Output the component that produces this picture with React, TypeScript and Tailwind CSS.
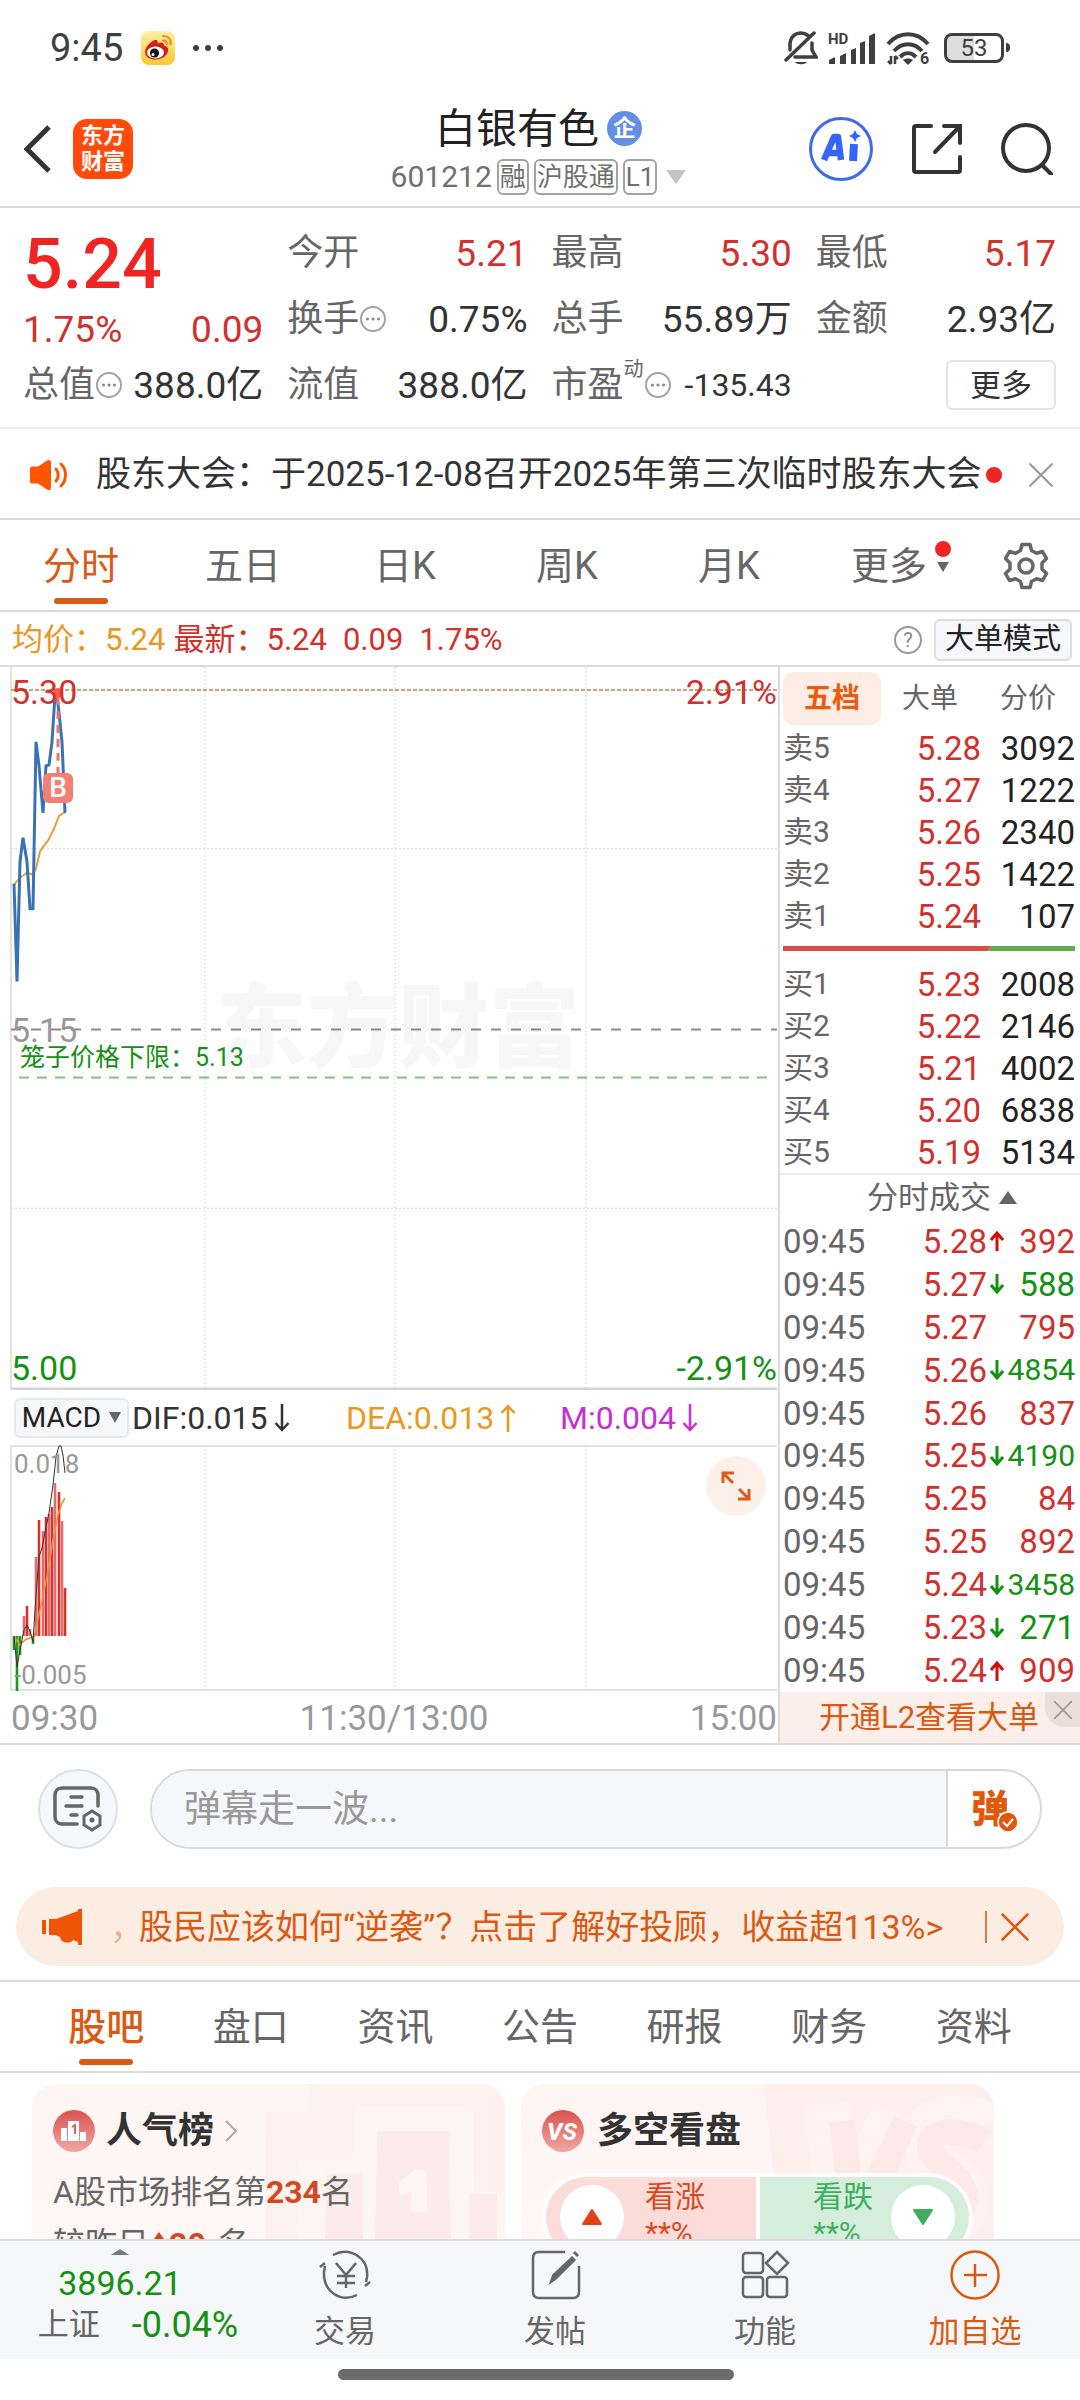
import type { ReactNode } from "react";
import clsx from "clsx";

const RED = "text-[#d0312d]";
const GREEN = "text-[#149114]";

const periods = ["分时", "五日", "日K", "周K", "月K"];

const sells = [
  { label: "卖5", price: "5.28", volume: "3092" },
  { label: "卖4", price: "5.27", volume: "1222" },
  { label: "卖3", price: "5.26", volume: "2340" },
  { label: "卖2", price: "5.25", volume: "1422" },
  { label: "卖1", price: "5.24", volume: "107" },
];

const buys = [
  { label: "买1", price: "5.23", volume: "2008" },
  { label: "买2", price: "5.22", volume: "2146" },
  { label: "买3", price: "5.21", volume: "4002" },
  { label: "买4", price: "5.20", volume: "6838" },
  { label: "买5", price: "5.19", volume: "5134" },
];

const trades = [
  { price: "5.28", dir: "up", volume: "392", buy: true },
  { price: "5.27", dir: "down", volume: "588", buy: false },
  { price: "5.27", dir: "", volume: "795", buy: true },
  { price: "5.26", dir: "down", volume: "4854", buy: false },
  { price: "5.26", dir: "", volume: "837", buy: true },
  { price: "5.25", dir: "down", volume: "4190", buy: false },
  { price: "5.25", dir: "", volume: "84", buy: true },
  { price: "5.25", dir: "", volume: "892", buy: true },
  { price: "5.24", dir: "down", volume: "3458", buy: false },
  { price: "5.23", dir: "down", volume: "271", buy: false },
  { price: "5.24", dir: "up", volume: "909", buy: true },
];

// MACD histogram: x, y of the bar's end; zero line is at 191
const macdBars = [
  [14, 205],
  [17, 246],
  [20, 210],
  [24, 171],
  [27, 161],
  [30, 184],
  [33, 199],
  [36, 112],
  [39, 75],
  [43, 86],
  [46, 72],
  [49, 69],
  [52, 62],
  [55, 38],
  [59, 47],
  [62, 76],
  [65, 143],
];

const infoTabs = ["股吧", "盘口", "资讯", "公告", "研报", "财务", "资料"];

const Arrow = ({ up }: { up?: boolean }) => (
  <svg viewBox="0 0 16 28" className="h-7 w-4" fill="none" stroke="currentColor" strokeWidth="2.500">
    {up ? <path d="M8 28V2M1.500 9L8 2l6.500 7" /> : <path d="M8 0v26M1.500 19L8 26l6.500-7" />}
  </svg>
);

const TickArrow = ({ up }: { up?: boolean }) => (
  <svg viewBox="0 0 14 20" className="mx-auto h-5 w-[14px]" fill="none" stroke="currentColor" strokeWidth="3">
    {up ? <path d="M7 20V2M1 9l6-7 6 7" /> : <path d="M7 0v18M1 11l6 7 6-7" />}
  </svg>
);

const Close = ({ className }: { className: string }) => (
  <svg viewBox="0 0 24 24" className={className} fill="none" stroke="currentColor" strokeLinecap="round">
    <path d="M2 2l20 20M22 2L2 22" />
  </svg>
);

const Dots = () => (
  <svg viewBox="0 0 28 28" className="h-7 w-7 shrink-0" fill="none" stroke="#a3a3a3" strokeWidth="2">
    <circle cx="14" cy="14" r="12" />
    <g fill="#8a8a8a" stroke="none">
      <circle cx="8.500" cy="14" r="1.600" />
      <circle cx="14" cy="14" r="1.600" />
      <circle cx="19.500" cy="14" r="1.600" />
    </g>
  </svg>
);

const StatusBar = () => (
  <div className="flex h-[95px] items-center pl-[50px] pr-[70px] text-[#3f3f3f]">
    <span className="text-[38px] leading-none">9:45</span>
    <svg viewBox="0 0 34 34" className="ml-[18px] h-[34px] w-[34px]">
      <defs>
        <linearGradient id="weibo" x1="0" y1="0" x2="0" y2="1">
          <stop offset="0" stopColor="#fdf0a8" />
          <stop offset="1" stopColor="#fdc92f" />
        </linearGradient>
      </defs>
      <rect width="34" height="34" rx="8" fill="url(#weibo)" />
      <path d="M4 21c0-5 6-11 10-12 3-.6 3 2 2.500 3.500 3-1.500 7-1.500 6.500 2 3 1 5 2.500 4 6-1.500 5-7 8-12.500 8S4 26 4 21z" fill="#d81e1c" />
      <ellipse cx="14.500" cy="21.500" rx="8.500" ry="6" fill="#fff" />
      <circle cx="13.500" cy="22" r="4.600" fill="#111" />
      <circle cx="12" cy="23.500" r="1.500" fill="#fff" />
      <path d="M22 5c5-.5 8.500 3.500 7.500 8.500M22 9.500c2.500-.3 4.200 1.500 3.700 4" stroke="#ef8a1c" strokeWidth="2" fill="none" strokeLinecap="round" />
    </svg>
    <svg viewBox="0 0 32 8" className="ml-[17px] h-2 w-8" fill="currentColor">
      <circle cx="4" cy="4" r="3" />
      <circle cx="16" cy="4" r="3" />
      <circle cx="28" cy="4" r="3" />
    </svg>

    <div className="ml-auto flex items-center">
      <svg viewBox="0 0 34 36" className="h-9 w-[34px]" fill="none" stroke="currentColor" strokeWidth="3.500" strokeLinecap="round">
        <path d="M6 20v-5C6 7 11 3 17 3c3 0 5 1 7 2.500M28 13v7l4 7H11M2 30L30 3" />
        <path d="M11 32h12c-1.500 3-10.500 3-12 0z" fill="currentColor" stroke="none" />
      </svg>
      <svg viewBox="0 0 48 34" className="ml-[10px] h-[34px] w-12" fill="currentColor">
        <path d="M1 33v-4l6-3v7zM12 33V25l6-3v11zM23 33V19l5-2v16zM32 33V12l5-2v23zM41 33V5l6-3v31z" />
        <text x="0" y="13" fontSize="15" fontWeight="700">HD</text>
      </svg>
      <svg viewBox="0 0 46 34" className="ml-[10px] h-[34px] w-[46px]" fill="none" stroke="currentColor" strokeWidth="4">
        <path d="M2 13c11-13 29-13 40 0M8 20c8-9 20-9 28 0M14 26c5-5 11-5 16 0" />
        <path d="M17 29c3-2 7-2 10 0l-5 5z" fill="currentColor" stroke="none" />
        <path d="M5 25v8M2 30l3 3M9 33v-8M9 25l3 3" strokeWidth="2.500" />
        <text x="34" y="33" fontSize="16" fontWeight="700" fill="currentColor" stroke="none">6</text>
      </svg>
      <div className="ml-3 flex h-[30px] w-[60px] items-center justify-center rounded-lg border-[3px] border-[#3f3f3f] bg-gradient-to-r from-[#dedede] from-50% to-white to-50% text-[24px] leading-6">
        53
      </div>
      <div className="ml-[2px] h-[9px] w-[4px] rounded-r bg-[#3f3f3f]" />
    </div>
  </div>
);

const Tag = ({ children }: { children: ReactNode }) => (
  <span className="flex h-9 items-center rounded-md border-2 border-[#a2a2a2] px-px text-[26px] leading-none">
    {children}
  </span>
);

const Header = () => (
  <header className="flex h-[113px] items-center border-b-2 border-[#dcdcdc] pl-6 pr-[27px]">
    <div className="flex flex-1 items-center gap-[22px] pb-1">
      <button type="button" aria-label="返回">
        <svg viewBox="0 0 27 48" className="h-12 w-[27px]" fill="none" stroke="#333" strokeWidth="5">
          <path d="M25 2L3 24l22 22" />
        </svg>
      </button>
      <div className="flex h-[60px] w-[60px] flex-col items-center justify-center rounded-[14px] bg-[#ff4a0a] text-[22px] font-bold leading-[26px] text-white">
        <span>东方</span>
        <span>财富</span>
      </div>
    </div>
    <div className="flex flex-col items-center gap-2">
      <h1 className="flex items-center gap-2 text-[41px] leading-[44px] text-[#222]">
        白银有色
        <span className="flex h-[35px] w-[35px] items-center justify-center rounded-full bg-[#648fe6] text-[23px] font-bold leading-none text-white">
          企
        </span>
      </h1>
      <div className="flex items-center gap-[5px] text-[30px] leading-9 text-[#707070]">
        601212
        <Tag>融</Tag>
        <Tag>沪股通</Tag>
        <Tag>L1</Tag>
        <svg viewBox="0 0 20 14" className="ml-1 h-[14px] w-5" fill="#c4c4c4">
          <path d="M0 0h20L10 14z" />
        </svg>
      </div>
    </div>
    <div className="flex flex-1 items-center justify-end gap-[38px] pb-1">
      <button type="button" aria-label="AI">
        <svg viewBox="0 0 64 64" className="h-16 w-16">
          <circle cx="32" cy="32" r="30.500" fill="#fff" stroke="#3f6ae8" strokeWidth="3" />
          <g fill="none" stroke="#3464fa" strokeWidth="7" strokeLinejoin="round">
            <path d="M15 43l10-23h4l3 23M19 36h12" strokeWidth="6.500" />
            <path d="M45 27l-1 17" strokeWidth="8" />
          </g>
          <path d="M46 13l2 4 4 2-4 2-2 4-2-4-4-2 4-2z" fill="#3464fa" />
        </svg>
      </button>
      <button type="button" aria-label="分享">
        <svg viewBox="0 0 52 52" className="h-[52px] w-[52px]" fill="none" stroke="#333" strokeWidth="4" strokeLinecap="round">
          <path d="M20 3H5c-1.500 0-2 .5-2 2v42c0 1.500.5 2 2 2h42c1.500 0 2-.5 2-2V34M33 3h16v17M49 3L24 29" />
        </svg>
      </button>
      <button type="button" aria-label="搜索">
        <svg viewBox="0 0 52 52" className="h-[52px] w-[52px]" fill="none" stroke="#333" strokeWidth="4" strokeLinecap="round">
          <circle cx="25" cy="25" r="23" />
          <path d="M41 42l9 9" />
        </svg>
      </button>
    </div>
  </header>
);

type QuoteProps = { label: string; value: string; red?: boolean; dots?: boolean; sup?: string; small?: boolean };

const Quote = ({ label, value, red, dots, sup, small }: QuoteProps) => (
  <div className="flex h-[66px] items-center whitespace-nowrap">
    <dt className="flex items-center text-[36px] leading-none text-[#666]">
      {label}
      {sup && <span className="mb-8 text-[20px]">{sup}</span>}
      {dots && <Dots />}
    </dt>
    <dd className={clsx("ml-auto leading-none", red ? RED : "text-[#333]", small ? "text-[32px]" : "text-[37px]")}>
      {value}
    </dd>
  </div>
);

const QuotePanel = () => (
  <dl className="grid grid-cols-4 gap-x-6 border-b-2 border-[#eee] pb-[9px] pl-[23px] pr-6 pt-3">
    <div className="row-span-2">
      <div className="h-[88px] text-[70px] font-medium leading-[88px] text-[#ee2524]">5.24</div>
      <div className={clsx("flex justify-between text-[37px] leading-[44px]", RED)}>
        <span>1.75%</span>
        <span>0.09</span>
      </div>
    </div>
    <Quote label="今开" value="5.21" red />
    <Quote label="最高" value="5.30" red />
    <Quote label="最低" value="5.17" red />
    <Quote label="换手" value="0.75%" dots />
    <Quote label="总手" value="55.89万" />
    <Quote label="金额" value="2.93亿" />
    <Quote label="总值" value="388.0亿" dots />
    <Quote label="流值" value="388.0亿" />
    <Quote label="市盈" sup="动" value="-135.43" dots small />
    <button type="button" className="h-[50px] w-[110px] self-center justify-self-end rounded-md border-2 border-[#e3e3e3] text-[31px] leading-none text-[#333]">
      更多
    </button>
  </dl>
);

const Notice = () => (
  <div className="flex h-[91px] items-center border-b-2 border-[#dcdcdc] pl-7 pr-[26px] pt-[2px]">
    <svg viewBox="0 0 42 34" className="h-[34px] w-[42px] shrink-0" fill="none" stroke="#fd5500" strokeWidth="3" strokeLinecap="round">
      <path d="M2 11c0-2 1-2.500 3-2.500h5l9-6c2-1.200 4-.5 4 2v25c0 2.500-2 3.200-4 2l-9-6H5c-2 0-3-.5-3-2.500z" fill="#fd5500" stroke="none" />
      <path d="M28 11c3 3.500 3 8.500 0 12M33 6c6 6 6 16 0 22" />
    </svg>
    <p className="ml-[26px] flex-1 whitespace-nowrap text-[35px] leading-[50px] text-[#333]">
      股东大会：于2025-12-08召开2025年第三次临时股东大会
    </p>
    <span className="h-4 w-4 shrink-0 rounded-full bg-[#ee2524]" />
    <button type="button" aria-label="关闭" className="ml-[26px] text-[#999]">
      <Close className="h-[26px] w-[26px] stroke-2" />
    </button>
  </div>
);

const PeriodTabs = () => (
  <nav className="flex h-[92px] border-b-2 border-[#dcdcdc] text-[38px] leading-none text-[#666]">
    {periods.map((p, i) => (
      <button key={p} type="button" className={clsx("relative w-[15%] pt-[2px]", i === 0 && "text-[#d95a14]")}>
        {p}
        {i === 0 && <span className="absolute bottom-[6px] left-1/2 h-[6px] w-[54px] -translate-x-1/2 rounded-full bg-[#d95a14]" />}
      </button>
    ))}
    <button type="button" className="flex w-[15%] items-center justify-center gap-2 pl-5 pt-[2px]">
      更多
      <span className="flex flex-col items-center gap-[5px] pb-5">
        <span className="h-4 w-4 rounded-full bg-[#ee2524]" />
        <svg viewBox="0 0 12 10" className="h-[10px] w-3" fill="#666">
          <path d="M0 0h12L6 10z" />
        </svg>
      </span>
    </button>
    <button type="button" aria-label="设置" className="flex w-[10%] items-center justify-center pt-[2px]">
      <svg viewBox="0 0 48 48" className="h-12 w-12" fill="none" stroke="#666" strokeWidth="3.500" strokeLinejoin="round">
        <path d="M20 2.500h8l1.500 6 5 2.800 6-1.800 4 7-4.500 4.500v6l4.500 4.500-4 7-6-1.800-5 2.800-1.500 6h-8l-1.500-6-5-2.800-6 1.800-4-7L8 27v-6l-4.500-4.500 4-7 6 1.800 5-2.800z" />
        <circle cx="24" cy="24" r="7" />
      </svg>
    </button>
  </nav>
);

const PriceInfo = () => (
  <div className="flex h-[55px] items-center border-b-2 border-[#dcdcdc] pl-[12px] pr-2 pt-[2px] text-[31px] leading-none">
    <span className="text-[#e8991f]">均价：5.24</span>
    <span className={clsx("ml-2 flex gap-4", RED)}>
      <span>最新：5.24</span>
      <span>0.09</span>
      <span>1.75%</span>
    </span>
    <button type="button" aria-label="说明" className="ml-auto flex h-7 w-7 items-center justify-center rounded-full border-2 border-[#999] text-[20px] text-[#888]">
      ?
    </button>
    <button type="button" className="ml-3 h-[42px] rounded-md border-2 border-[#dcdee2] bg-[#f6f7fa] px-[9px] text-[29px] leading-none text-[#222]">
      大单模式
    </button>
  </div>
);

const PriceChart = () => (
  <div className="relative h-[723px] overflow-hidden text-[34px] leading-none">
    <span className="absolute left-[216px] top-[317px] text-[91px] font-black text-[#f7f7f7]">东方财富</span>
    <svg viewBox="0 0 778 724" preserveAspectRatio="none" className="absolute inset-0 h-full w-full" fill="none">
      <path d="M11 0V724" stroke="#e2e2e2" strokeWidth="2" />
      <path d="M205 0V724M395 0V724M586 0V724M11 182H777M11 542H777" stroke="#d6d6d6" strokeDasharray="2 2" />
      <path d="M11 723H777" stroke="#d4d4d4" strokeWidth="3" />
      <path d="M11 23H777" stroke="#bd8250" strokeWidth="1.500" strokeDasharray="4 2" />
      <path d="M11 363H777" stroke="#8a8a8a" strokeWidth="2" strokeDasharray="10 10" />
      <path d="M19 411H767" stroke="#7cc47c" strokeWidth="2" strokeDasharray="10 8" />
      <path d="M14 218L20 211L27 206L33 208L36 202L40 185L43 180L48 174L54 162L59 149L62 147L65 146" stroke="#e3a03c" strokeWidth="2" />
      <path
        d="M14 217L17 315L20 195L23 171L27 195L30 242H33L36 75L39 99L43 146L46 99L49 98L52 75L55 28H57L59 46L62 75L65 146"
        stroke="#3a72b5"
        strokeWidth="3"
      />
      <path d="M58 30V107" stroke="#f0726a" strokeWidth="3" strokeDasharray="8 6" />
      <circle cx="58" cy="26" r="5" fill="#fb5a48" />
    </svg>
    <span className="absolute left-[43px] top-[106px] h-[30px] w-[30px] rounded-md bg-[#f47f73] text-center text-[28px] font-medium leading-[30px] text-white">
      B
    </span>
    <span className={clsx("absolute left-[11px] top-2", RED)}>5.30</span>
    <span className={clsx("absolute right-[1px] top-2", RED)}>2.91%</span>
    <span className="absolute left-[11px] top-[346px] text-[#999]">5.15</span>
    <span className={clsx("absolute left-5 top-[378px] text-[25px]", GREEN)}>笼子价格下限：5.13</span>
    <span className={clsx("absolute bottom-[5px] left-[11px]", GREEN)}>5.00</span>
    <span className={clsx("absolute bottom-[5px] right-[1px]", GREEN)}>-2.91%</span>
  </div>
);

const MacdChart = () => (
  <>
    <div className="flex h-[55px] items-center pl-[14px] text-[32px] leading-none">
      <button type="button" className="flex h-10 w-[115px] items-center justify-center gap-2 rounded-md border-2 border-[#e6e8eb] bg-[#f6f7fa] text-[28px] leading-none text-[#222]">
        MACD
        <svg viewBox="0 0 12 11" className="h-[11px] w-3" fill="#666">
          <path d="M0 0h12L6 11z" />
        </svg>
      </button>
      <span className="ml-[3px] flex w-[214px] items-center gap-[6px] text-[#333]">
        DIF:0.015
        <Arrow />
      </span>
      <span className="flex w-[214px] items-center gap-[6px] text-[#e8991f]">
        DEA:0.013
        <Arrow up />
      </span>
      <span className="flex items-center gap-[6px] text-[#c72fce]">
        M:0.004
        <Arrow />
      </span>
    </div>
    <div className="relative h-[246px] text-[26px] leading-none text-[#999]">
      <svg viewBox="0 0 778 246" preserveAspectRatio="none" className="absolute inset-0 h-full w-full" fill="none">
        <path d="M777 1H11V245H777" stroke="#e2e2e2" strokeWidth="2" />
        <path d="M205 0V246M395 0V246M586 0V246" stroke="#d6d6d6" strokeDasharray="2 2" />
        {macdBars.map(([x, y], i) => (
          <path key={x} d={`M${x} 191V${y}`} strokeWidth="2.600" stroke={y > 191 ? "#1c9a1c" : i % 2 ? "#e86a66" : "#d9302d"} />
        ))}
        <path d="M14 191L20 200L25 195L30 193L34 192L40 165L47 132L53 95L58 70L62 58L65 53" stroke="#f0912e" strokeWidth="1.500" />
        <path d="M14 191L17 222L20 205L24 185L27 180L30 186L33 197L36 150L39 112L42 103L46 82L49 68L53 40L56 12L59 1H61L63 10L65 28" stroke="#333" />
      </svg>
      <span className="absolute left-[14px] top-[6px]">0.018</span>
      <span className="absolute bottom-[3px] left-[14px]">-0.005</span>
      <button type="button" aria-label="展开" className="absolute right-3 top-[11px] flex h-[60px] w-[60px] items-center justify-center rounded-full bg-[#fdf0e9]">
        <svg viewBox="0 0 30 30" className="h-[30px] w-[30px]" fill="none" stroke="#db5c16" strokeWidth="3">
          <path d="M2 12V2h11M2 2l10 10M28 18v10H17M28 28L18 18" />
        </svg>
      </button>
    </div>
    <div className="flex h-[52px] items-center justify-between pl-[11px] pr-[1px] pt-[2px] text-[35px] leading-none text-[#999]">
      <span>09:30</span>
      <span>11:30/13:00</span>
      <span>15:00</span>
    </div>
  </>
);

const BookRows = ({ rows }: { rows: typeof sells }) => (
  <table className="w-full text-[33px] leading-none">
    <tbody>
      {rows.map((r) => (
        <tr key={r.label} className="h-[42px]">
          <th scope="row" className="text-left text-[30px] font-normal text-[#666]">{r.label}</th>
          <td className={clsx("text-right", RED)}>{r.price}</td>
          <td className="w-[94px] text-right text-[#222]">{r.volume}</td>
        </tr>
      ))}
    </tbody>
  </table>
);

const OrderBook = () => (
  <aside className="flex w-[302px] shrink-0 flex-col border-l-2 border-[#dcdcdc]">
    <div className="flex px-[3px] pt-[5px] text-[28px] leading-none text-[#666]">
      <button type="button" className="h-[53px] flex-1 rounded-[10px] bg-[#feede4] font-bold text-[#ec5a0e]">五档</button>
      <button type="button" className="flex-1">大单</button>
      <button type="button" className="flex-1">分价</button>
    </div>
    <div className="pl-[3px] pr-[5px] pt-[2px]">
      <BookRows rows={sells} />
      <svg viewBox="0 0 291 5" preserveAspectRatio="none" className="mb-3 mt-[9px] h-[5px] w-full">
        <path d="M0 0h208l-4 5H0z" fill="#d84c49" />
        <path d="M208 0h83v5h-87z" fill="#5cb04a" />
      </svg>
      <BookRows rows={buys} />
    </div>
    <button type="button" className="flex h-[47px] items-center justify-center gap-2 border-t-2 border-[#eee] pl-6 text-[31px] leading-none text-[#666]">
      分时成交
      <svg viewBox="0 0 18 13" className="h-[13px] w-[18px]" fill="#666">
        <path d="M0 13h18L9 0z" />
      </svg>
    </button>
    <table className="ml-[3px] mr-[5px] grow text-[33px] leading-none">
      <tbody>
        {trades.map((t, i) => (
          <tr key={i}>
            <td className="text-[#666]">09:45</td>
            <td className={clsx("text-right", RED)}>{t.price}</td>
            <td className={clsx("w-5", t.dir === "up" ? "text-[#d00f0f]" : GREEN)}>
              {t.dir && <TickArrow up={t.dir === "up"} />}
            </td>
            <td className={clsx("w-[68px] text-right", t.buy ? RED : GREEN, t.volume.length > 3 && "text-[30px]")}>
              {t.volume}
            </td>
          </tr>
        ))}
      </tbody>
    </table>
    <div className="relative flex h-[51px] items-center justify-center bg-[#fcefe9] text-[31px] leading-none text-[#d95a14]">
      <a href="#l2" className="pr-[2px]">开通L2查看大单</a>
      <button type="button" aria-label="关闭" className="absolute right-0 top-0 flex h-[35px] w-[35px] items-center justify-center rounded-bl-[20px] bg-[#ecdfda] text-[#999]">
        <Close className="h-5 w-5 stroke-2" />
      </button>
    </div>
  </aside>
);

const CommentBar = () => (
  <div className="flex items-center gap-8 px-[38px] pt-6">
    <button type="button" aria-label="弹幕设置" className="flex h-20 w-20 items-center justify-center rounded-full border-2 border-[#dde0e3] bg-[#f6f7fa]">
      <svg viewBox="0 0 50 46" className="h-[46px] w-[50px]" fill="none" stroke="#666" strokeWidth="3.500" strokeLinecap="round">
        <path d="M24 38H9c-4 0-7-3-7-7V9c0-4 3-7 7-7h29c4 0 7 3 7 7v11" />
        <path d="M18 11h11M13 20h16M18 29h6" />
        <path d="M39 25l8 5v9l-8 5-8-5v-9z" strokeWidth="3" />
        <circle cx="39" cy="34" r="2.500" fill="#666" stroke="none" />
      </svg>
    </button>
    <div className="flex h-20 flex-1 overflow-hidden rounded-full border-2 border-[#d6dadc]">
      <input
        aria-label="弹幕"
        placeholder="弹幕走一波..."
        className="min-w-0 flex-1 bg-[#f6f7fa] pl-8 text-[37px] leading-none outline-none placeholder:text-[#999]"
      />
      <button type="button" className="relative w-[94px] border-l-2 border-[#d6dadc] pr-2 text-[38px] font-black leading-none text-[#e0580c]">
        弹
        <svg viewBox="0 0 22 22" className="absolute bottom-[14px] right-[21px] h-[22px] w-[22px]">
          <circle cx="11" cy="11" r="10" fill="#e0580c" stroke="#fff" strokeWidth="1.500" />
          <path d="M6 11l4 4 6-7" fill="none" stroke="#fff" strokeWidth="2" />
        </svg>
      </button>
    </div>
  </div>
);

const Promo = () => (
  <div className="mx-4 mb-[14px] mt-[38px] flex h-[79px] items-center rounded-full bg-[#fcede3] pl-[26px] pr-[34px] text-[#d95a14]">
    <svg viewBox="0 0 40 36" className="h-9 w-10 shrink-0" fill="#ee5606">
      <path d="M0 11h4v14H0zM7 10h7l22-8V0h4v36h-4v-3l-5-2c-2 4-12 4-13-3l-5-2H7z" />
    </svg>
    <span className="ml-7 w-[34px] text-[34px] leading-10 opacity-40">，</span>
    <a href="#promo" className="-ml-[5px] flex-1 whitespace-nowrap text-[34px] leading-10">
      股民应该如何“逆袭”？点击了解好投顾，收益超113%&gt;
    </a>
    <span className="mr-[13px] h-8 w-[2px] bg-[#d97a44]" />
    <button type="button" aria-label="关闭">
      <Close className="h-[30px] w-[30px] stroke-2" />
    </button>
  </div>
);

const InfoTabs = () => (
  <nav className="flex h-[93px] border-y-2 border-[#dcdcdc] px-[34px] text-[38px] leading-none text-[#666]">
    {infoTabs.map((t, i) => (
      <button key={t} type="button" className={clsx("relative flex-1", i === 0 && "font-medium text-[#d95a14]")}>
        {t}
        {i === 0 && <span className="absolute bottom-[6px] left-1/2 h-[6px] w-[54px] -translate-x-1/2 rounded-full bg-[#d95a14]" />}
      </button>
    ))}
  </nav>
);

const CardIcon = ({ children }: { children: ReactNode }) => (
  <svg viewBox="0 0 42 42" className="h-[42px] w-[42px]">
    <circle cx="21" cy="21" r="21" fill="url(#badge)" />
    {children}
  </svg>
);

const Cards = () => (
  <section className="flex min-h-0 flex-1 items-start gap-4 overflow-hidden pl-8 pr-[86px] pt-[11px]">
    <svg className="absolute h-0 w-0" aria-hidden="true">
      <defs>
        <linearGradient id="badge" x1="0" y1="0" x2="0" y2="1">
          <stop offset="0" stopColor="#d9534f" />
          <stop offset="1" stopColor="#f2a7a3" />
        </linearGradient>
      </defs>
    </svg>
    <article className="relative h-[260px] flex-1 overflow-hidden rounded-[24px] bg-gradient-to-b from-[#fef5f3] to-[#fffaf8] px-[21px] pt-[26px]">
      <svg viewBox="0 0 240 260" className="absolute right-0 top-0 h-[260px] w-[240px]">
        <path d="M44 0H240V260H0V28H44z" fill="#feefed" opacity=".6" />
        <path d="M88 22H208V110H240V260H32V74H88z" fill="#fff6f4" />
        <path d="M112 47H184L188 260H108zM62 90H98V260H56zM204 110H232V260H206z" fill="#fdebe9" />
        <path d="M134 98L150 86h12V128H146V108L134 112z" fill="#fff6f4" />
      </svg>
      <h2 className="relative flex items-center gap-[11px] text-[36px] font-bold leading-[42px] text-[#333]">
        <CardIcon>
          <path d="M8 18h6v13H8zM15 11h11v20H15zM27 22h6v9h-6z" fill="#fff" />
          <path d="M19 17l3-2v9" fill="none" stroke="#d9635f" strokeWidth="2" />
        </CardIcon>
        人气榜
        <svg viewBox="0 0 12 22" className="h-[22px] w-3" fill="none" stroke="#aaa" strokeWidth="2">
          <path d="M1 1l10 10L1 21" />
        </svg>
      </h2>
      <p className="relative mt-[18px] text-[32px] leading-[44px] text-[#666]">
        A股市场排名第<b className="font-bold text-[#d5471c]">234</b>名
      </p>
      <p className="relative mt-[8px] flex items-center text-[32px] leading-[44px] text-[#666]">
        较昨日
        <svg viewBox="0 0 16 24" className="mx-[2px] h-6 w-4" fill="#d5471c">
          <path d="M8 0l8 11h-5v13H5V11H0z" />
        </svg>
        <b className="mr-3 font-bold text-[#d5471c]">20</b>名
      </p>
    </article>

    <article className="relative h-[260px] flex-1 overflow-hidden rounded-[24px] bg-gradient-to-b from-[#fef5f3] to-[#fffaf8] px-[21px] pt-[26px]">
      <svg viewBox="0 0 230 260" className="absolute right-0 top-0 h-[260px] w-[230px]">
        <path d="M0 0H230V260H28z" fill="#feefed" />
        <g fill="none" strokeLinejoin="round">
          <path d="M62 20l14 120L130 28M225 42c-20-14-66-14-66 16s50 30 44 60-40 30-60 22" stroke="#fff3f1" strokeWidth="44" />
          <path d="M78 37l12 110L142 37M220 58c-20-14-54-14-54 4s40 30 34 56-30 26-60 18" stroke="#fde9e7" strokeWidth="26" />
        </g>
      </svg>
      <h2 className="relative flex items-center gap-[13px] text-[36px] font-bold leading-[42px] text-[#333]">
        <CardIcon>
          <text x="20" y="30" textAnchor="middle" fontSize="24" fontWeight="800" fontStyle="italic" fill="#fff">VS</text>
        </CardIcon>
        多空看盘
      </h2>
      <div className="relative mt-[21px] flex h-[88px] rounded-full border-4 border-white/80 text-[30px] leading-9">
        <button type="button" className="flex flex-1 items-start rounded-l-full bg-[#fcdcd8] pl-[14px] pt-2 text-left text-[#d9481f]">
          <span className="flex h-16 w-16 items-center justify-center rounded-full bg-white">
            <svg viewBox="0 0 20 16" className="h-4 w-5" fill="#e24216" stroke="#e24216" strokeWidth="2" strokeLinejoin="round">
              <path d="M10 1l9 14H1z" />
            </svg>
          </span>
          <span className="-mt-[6px] ml-[21px]">
            看涨
            <br />
            **%
          </span>
        </button>
        <span className="w-1 bg-white" />
        <button type="button" className="flex flex-1 items-start justify-end rounded-r-full bg-[#d5eedb] pr-[14px] pt-2 text-left text-[#3fae60]">
          <span className="-mt-[6px] mr-[18px]">
            看跌
            <br />
            **%
          </span>
          <span className="flex h-16 w-16 items-center justify-center rounded-full bg-white">
            <svg viewBox="0 0 20 16" className="h-4 w-5" fill="#3fae60" stroke="#3fae60" strokeWidth="2" strokeLinejoin="round">
              <path d="M1 1h18l-9 14z" />
            </svg>
          </span>
        </button>
      </div>
    </article>
  </section>
);

const actions = [
  {
    label: "交易",
    icon: (
      <>
        <path d="M14 5C31-4 50 8 48 27l-1 5M38 45C22 53 4 42 5 22l1-6" />
        <path d="M1 17l5-4M51 32l-5 4M27 25v13M17 13l10 12 10-12M18 26h18M18 33h18" />
      </>
    ),
  },
  {
    label: "发帖",
    icon: (
      <>
        <path d="M36 2H10C6 2 4 4 4 8v34c0 4 2 6 6 6h34c4 0 6-2 6-6V16" />
        <path d="M21 33l3-8L43 7l3 3-19 19z" fill="currentColor" strokeWidth="1.500" />
        <path d="M46 5l2-2" strokeWidth="6" />
      </>
    ),
  },
  {
    label: "功能",
    icon: (
      <>
        <rect x="4" y="3" width="20" height="20" rx="3" />
        <rect x="4" y="27" width="20" height="20" rx="3" />
        <rect x="28" y="27" width="20" height="20" rx="3" />
        <path d="M38 2l11 11-11 11-11-11z" />
      </>
    ),
  },
  {
    label: "加自选",
    active: true,
    icon: (
      <>
        <circle cx="26" cy="25" r="23.500" />
        <path d="M26 14v23M15 25h23" />
      </>
    ),
  },
];

const BottomBar = () => (
  <footer className="shrink-0">
    <div className="flex h-[120px] border-t-2 border-[#d8dadc] bg-[#f6f7f9] text-[31px] leading-10 text-[#666]">
      <button type="button" className="flex w-[240px] flex-col items-center pt-2">
        <svg viewBox="0 0 18 6" className="h-[6px] w-[18px]" fill="#777">
          <path d="M0 6h18L9 0z" />
        </svg>
        <span className={clsx("mt-2 text-[34px]", GREEN)}>3896.21</span>
        <span className="mt-[2px] flex gap-8 pl-9">
          上证
          <span className={clsx("text-[36px]", GREEN)}>-0.04%</span>
        </span>
      </button>
      {actions.map((a) => (
        <button key={a.label} type="button" className={clsx("flex flex-1 flex-col items-center pt-[9px]", a.active && "text-[#d95a14]")}>
          <svg viewBox="0 0 52 50" className="h-[50px] w-[52px]" fill="none" stroke="currentColor" strokeWidth="2.500">
            {a.icon}
          </svg>
          <span className="mt-[12px]">{a.label}</span>
        </button>
      ))}
    </div>
    <div className="flex h-[41px] justify-center pr-2 pt-[10px]">
      <div className="h-[11px] w-[37%] rounded-full bg-[#6b6b6b]" />
    </div>
  </footer>
);

export default function App() {
  return (
    <div className="flex h-screen flex-col overflow-hidden bg-white font-['Roboto','Noto_Sans_CJK_SC',sans-serif]">
      <StatusBar />
      <Header />
      <QuotePanel />
      <Notice />
      <PeriodTabs />
      <PriceInfo />
      <main className="flex border-b-2 border-[#dcdcdc]">
        <div className="min-w-0 flex-1">
          <PriceChart />
          <MacdChart />
        </div>
        <OrderBook />
      </main>
      <CommentBar />
      <Promo />
      <InfoTabs />
      <Cards />
      <BottomBar />
    </div>
  );
}
